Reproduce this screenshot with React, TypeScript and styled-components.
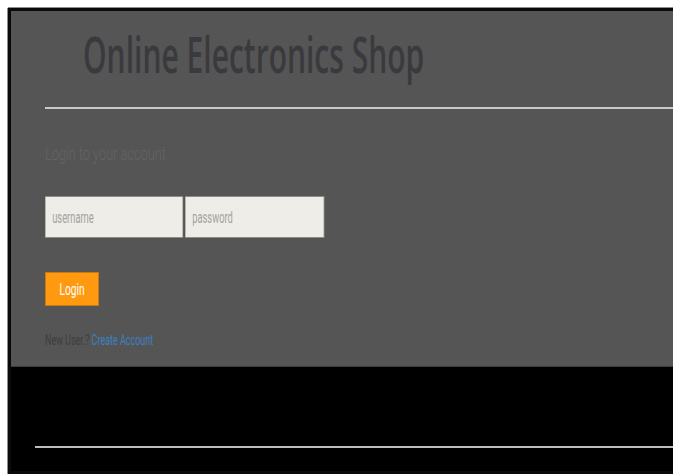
import styled, { createGlobalStyle } from "styled-components";

const GlobalStyle = createGlobalStyle`
  html, body {
    margin: 0;
    padding: 0;
    background: #ffffff;
    overflow: hidden;
  }
  body {
    font-family: Roboto, "Liberation Sans", Arial, sans-serif;
  }
`;

// page frame runs off the right side of the window, so no right border
const Frame = styled.div`
  box-sizing: border-box;
  margin: 8px 0 0 8px;
  width: calc(100vw - 8px);
  border: 3px solid #0a0a0a;
  border-right: none;
  box-shadow: -1px 0 0 #8e8e8e, 0 -1px 0 #8e8e8e, 0 1px 0 #8e8e8e;
`;

const Main = styled.main`
  background: #555555;
  height: 355px;
  display: flex;
  flex-direction: column;
`;

const Header = styled.header`
  height: 96px;
  display: flex;
  align-items: center;
  padding: 0 0 10px 72px;
  box-sizing: border-box;
`;

const Title = styled.h1`
  margin: 0;
  display: inline-block;
  font-family: "Open Sans", "Noto Sans", sans-serif;
  font-weight: 600;
  font-size: 50px;
  color: #3a3a3e;
  white-space: nowrap;
  transform: scaleX(0.6);
  transform-origin: left center;
`;

const Rule = styled.hr<{ $inset: number; $color: string }>`
  margin: 0 0 0 ${({ $inset }) => $inset}px;
  border: none;
  height: 2px;
  background: ${({ $color }) => $color};
`;

const LoginBox = styled.section`
  padding: 33px 0 0 34px;
  display: flex;
  flex-direction: column;
  align-items: flex-start;
`;

const Heading = styled.h2`
  margin: 0;
  display: inline-block;
  font-family: Roboto, sans-serif;
  font-weight: 300;
  font-size: 19px;
  color: #646464;
  white-space: nowrap;
  transform: scaleX(0.67);
  transform-origin: left center;
`;

const Fields = styled.div`
  margin-top: 31px;
  display: flex;
  gap: 2px;
`;

const Field = styled.div<{ $width: number }>`
  width: ${({ $width }) => $width}px;
  height: 42px;
`;

const Input = styled.input<{ $width: number }>`
  box-sizing: border-box;
  width: ${({ $width }) => $width / 0.55}px;
  height: 42px;
  padding: 0 12px;
  background: #eeede7;
  border: 1px solid #8d8d88;
  font-family: Roboto, sans-serif;
  font-size: 17px;
  color: #333;
  outline: none;
  transform: scaleX(0.55);
  transform-origin: left center;

  &::placeholder {
    color: #a3a3a0;
  }
`;

const LoginButton = styled.button`
  margin-top: 34px;
  width: 54px;
  height: 34px;
  padding: 0;
  background: #ff9a10;
  border: 1px solid #c77a12;
  display: flex;
  align-items: center;
  justify-content: center;
  cursor: pointer;
`;

const ButtonLabel = styled.span`
  display: inline-block;
  font-family: Roboto, sans-serif;
  font-size: 17px;
  color: #ffffff;
  transform: scaleX(0.6);
`;

const SignupLine = styled.p`
  margin: 26px 0 0;
  display: inline-block;
  font-family: Roboto, sans-serif;
  font-size: 14px;
  color: #3e3e3e;
  white-space: nowrap;
  transform: scaleX(0.64);
  transform-origin: left center;

  a {
    color: #3d80c6;
    text-decoration: none;
  }
`;

const Footer = styled.footer`
  background: #000000;
  height: 105px;
  border-top: 1px solid #3c3c3c;
  display: flex;
  flex-direction: column;
  justify-content: flex-end;
  padding-bottom: 23px;
  box-sizing: border-box;
`;

export default function App() {
  return (
    <>
      <GlobalStyle />
      <Frame>
        <Main>
          <Header>
            <Title>Online Electronics Shop</Title>
          </Header>
          <Rule $inset={34} $color="#c9c9c9" />
          <LoginBox>
            <Heading>Login to your account</Heading>
            <Fields>
              <Field $width={138}>
                <Input $width={138} type="text" placeholder="username" />
              </Field>
              <Field $width={139}>
                <Input $width={139} type="password" placeholder="password" />
              </Field>
            </Fields>
            <LoginButton type="button">
              <ButtonLabel>Login</ButtonLabel>
            </LoginButton>
            <SignupLine>
              New User.? <a href="#signup">Create Account</a>
            </SignupLine>
          </LoginBox>
        </Main>
        <Footer>
          <Rule $inset={24} $color="#bdbdbd" />
        </Footer>
      </Frame>
    </>
  );
}
